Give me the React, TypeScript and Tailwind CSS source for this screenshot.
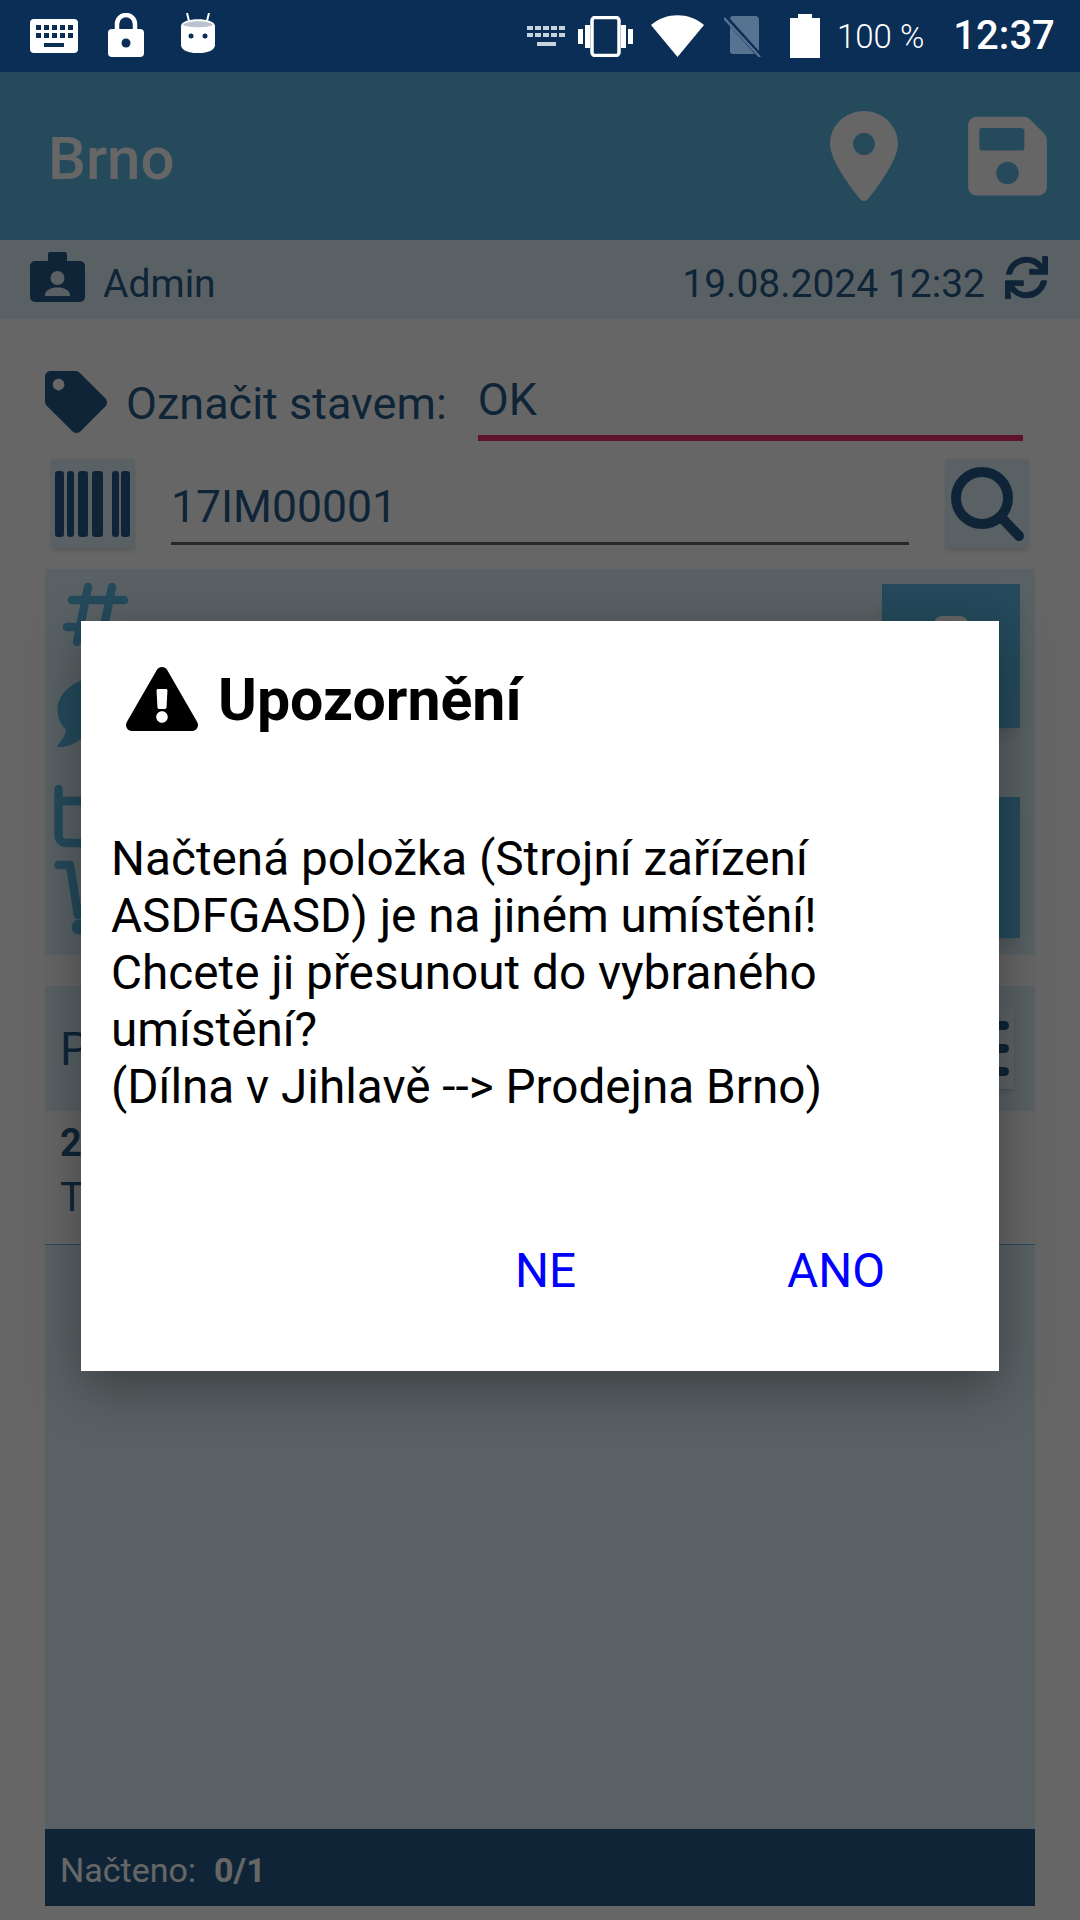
import React from 'react';
import { FaComment, FaExclamationTriangle, FaSave, FaSync, FaTag } from 'react-icons/fa';

const KeyboardIcon = () => (
  <svg width="48" height="34" viewBox="0 0 48 34">
    <rect width="48" height="34" rx="4" fill="#fff" />
    {[6, 14, 22, 30, 38].map(x => (
      <React.Fragment key={x}>
        <rect x={x} y="6" width="5" height="5" fill="#0a2e56" />
        <rect x={x} y="14" width="5" height="5" fill="#0a2e56" />
      </React.Fragment>
    ))}
    <rect x="14" y="24" width="20" height="4" fill="#0a2e56" />
  </svg>
);

const LockIcon = () => (
  <svg width="36" height="44" viewBox="0 0 36 44">
    <path d="M9 18V11a9 9 0 0 1 18 0v7" fill="none" stroke="#fff" strokeWidth="4.5" />
    <rect y="16" width="36" height="28" rx="4" fill="#fff" />
    <circle cx="18" cy="30" r="4.5" fill="#0a2e56" />
  </svg>
);

const RobotIcon = () => (
  <svg width="34" height="40" viewBox="0 0 34 40">
    <path d="M8 8 6 0M26 8l2-8" stroke="#fff" strokeWidth="2" />
    <path d="M0 13c0-9 34-9 34 0v19c0 11-34 11-34 0z" fill="#fff" />
    <path d="M2 12c4-5 26-5 30 0-6 3-24 3-30 0z" fill="#b9c3cf" />
    <circle cx="10" cy="23" r="2.5" fill="#0a2e56" />
    <circle cx="24" cy="23" r="2.5" fill="#0a2e56" />
  </svg>
);

const SmallKeyboardIcon = () => (
  <svg width="39" height="21" viewBox="0 0 39 21">
    {[0, 8, 16, 24, 32].map(x => (
      <React.Fragment key={x}>
        <rect x={x} y="0" width="6" height="4" fill="#c9d3de" />
        <rect x={x} y="7" width="6" height="4" fill="#c9d3de" />
      </React.Fragment>
    ))}
    <rect x="10" y="16" width="19" height="4" fill="#c9d3de" />
  </svg>
);

const VibrateIcon = () => (
  <svg width="55" height="41" viewBox="0 0 55 41">
    <rect x="14" y="1.5" width="27" height="38" rx="3" fill="none" stroke="#fff" strokeWidth="3.5" />
    <rect x="0" y="13" width="5" height="15" fill="#fff" />
    <rect x="7" y="9" width="5" height="23" fill="#fff" />
    <rect x="43" y="9" width="5" height="23" fill="#fff" />
    <rect x="50" y="13" width="5" height="15" fill="#fff" />
  </svg>
);

const WifiIcon = () => (
  <svg width="53" height="42" viewBox="0 0 53 42">
    <path d="M0 10C15-3 38-3 53 10L26.5 42z" fill="#fff" />
  </svg>
);

const NoSimIcon = () => (
  <svg width="38" height="42" viewBox="0 0 38 42">
    <path d="M6 4a3 3 0 0 1 3-3h22a4 4 0 0 1 4 4v31a3 3 0 0 1-3 3H9a3 3 0 0 1-3-3z" fill="#567391" />
    <path d="M1 2 36 41" stroke="#0a2e56" strokeWidth="5" />
    <path d="M0 3 36 42" stroke="#567391" strokeWidth="2.5" />
  </svg>
);

const BatteryIcon = () => (
  <svg width="30" height="44" viewBox="0 0 30 44">
    <path d="M8 0h14v4h8v40H0V4h8z" fill="#fff" />
  </svg>
);

const PinIcon = () => (
  <svg width="68" height="90" viewBox="0 0 68 90">
    <path
      fillRule="evenodd"
      d="M34 0C15 0 0 15 0 33c0 15 18 40 30 55a5 5 0 0 0 8 0c12-15 30-40 30-55C68 15 53 0 34 0zm0 22a11 11 0 1 1 0 22 11 11 0 0 1 0-22z"
      fill="currentColor"
    />
  </svg>
);

const BadgeIcon = () => (
  <svg width="55" height="50" viewBox="0 0 55 50">
    <path
      fillRule="evenodd"
      d="M20 0h15a2 2 0 0 1 2 2v7h13a5 5 0 0 1 5 5v31a5 5 0 0 1-5 5H5a5 5 0 0 1-5-5V14a5 5 0 0 1 5-5h13V2a2 2 0 0 1 2-2zM27.500 19a7 7 0 1 0 0 14 7 7 0 0 0 0-14zM15 43c0-10 25-10 25 0v1H15z"
      fill="currentColor"
    />
  </svg>
);

const BarcodeIcon = () => (
  <svg width="76" height="66" viewBox="0 0 76 66" fill="currentColor">
    <rect x="0" y="0" width="9" height="66" rx="3" />
    <rect x="12" y="0" width="7" height="66" rx="3" />
    <rect x="23" y="0" width="10" height="66" rx="3" />
    <rect x="37" y="0" width="11" height="66" rx="3" />
    <rect x="57" y="0" width="7" height="66" rx="3" />
    <rect x="66" y="0" width="9" height="66" rx="3" />
  </svg>
);

const SearchIcon = () => (
  <svg width="74" height="75" viewBox="0 0 74 75" fill="none" stroke="currentColor" strokeLinecap="round">
    <circle cx="32" cy="32" r="26" strokeWidth="10" />
    <path d="M51 51 69 70" strokeWidth="10" />
  </svg>
);

const HashIcon = () => (
  <svg width="66" height="66" viewBox="0 0 66 66" fill="none" stroke="currentColor" strokeWidth="8.500" strokeLinecap="round">
    <path d="M25 5 14 60M49 5 38 60M9 18h52M4 45h52" />
  </svg>
);

const BoxCartIcon = () => (
  <svg width="90" height="160" viewBox="0 0 90 160" className="text-[#5bbae6]">
    <g fill="none" stroke="currentColor" strokeWidth="8.500" strokeLinecap="round" strokeLinejoin="round">
      <path d="M4.500 9v46a8 8 0 0 0 8 8h72M4.500 21h80" />
      <path d="M4.500 85H16l8 50" />
      <path d="M26 133h60" />
    </g>
    <circle cx="25" cy="147" r="7.500" fill="currentColor" />
  </svg>
);

const App: React.FC = () => {
  return (
    <div className="relative w-[1080px] h-[1920px] overflow-hidden bg-white flex flex-col font-['Roboto',sans-serif] text-[#265d8a]">
      <div className="relative z-20 h-[72px] shrink-0 bg-[#0a2e56] flex items-center text-white">
        <div className="ml-[30px]"><KeyboardIcon /></div>
        <div className="ml-[30px] mb-[2px]"><LockIcon /></div>
        <div className="ml-[37px] mb-[6px]"><RobotIcon /></div>
        <div className="ml-[312px]"><SmallKeyboardIcon /></div>
        <div className="ml-[12px]"><VibrateIcon /></div>
        <div className="ml-[18px]"><WifiIcon /></div>
        <div className="ml-[20px]"><NoSimIcon /></div>
        <div className="ml-[28px]"><BatteryIcon /></div>
        <span className="ml-[17px] text-[33px] leading-none font-light">100 %</span>
        <span className="ml-[29px] text-[40px] leading-none font-medium">12:37</span>
      </div>

      <div className="h-[168px] shrink-0 bg-[#5bbae6] flex items-center justify-between pl-[48px] pr-[33px] text-white">
        <span className="mt-[5px] text-[60px] leading-none font-medium">Brno</span>
        <div className="flex items-center gap-[70px]">
          <PinIcon />
          <FaSave className="w-[79px] h-[90px]" />
        </div>
      </div>

      <div className="h-[79px] shrink-0 bg-[#dff3fa] flex items-center pl-[30px] pr-[30px]">
        <div className="mb-[6px]"><BadgeIcon /></div>
        <span className="ml-[18px] mt-[9px] text-[39px] leading-none">Admin</span>
        <span className="ml-auto mt-[9px] text-[39px] leading-none">19.08.2024 12:32</span>
        <FaSync className="ml-[18px] w-[47px] h-[43px] mb-[5px]" />
      </div>

      <main className="flex-1 flex flex-col px-[45px] pb-[14px]">
        <div className="mt-[52px] h-[70px] flex items-start">
          <FaTag className="w-[62px] h-[62px]" />
          <span className="ml-[19px] mt-[10px] text-[45px] leading-none">Označit stavem:</span>
          <div className="ml-[31px] flex-1 mr-[12px] h-[70px] border-b-[6px] border-[#ef2f6e]">
            <span className="block mt-[3px] text-[45px] leading-[52px]">OK</span>
          </div>
        </div>

        <div className="mt-[18px] h-[89px] flex items-start px-[6px]">
          <button className="w-[84px] h-[89px] bg-[#dff3fa] shadow-md flex items-center justify-center">
            <BarcodeIcon />
          </button>
          <div className="ml-[36px] w-[738px] h-[86px] border-b-[3px] border-[#666666] flex items-end pb-[13px]">
            <span className="text-[44.500px] leading-none">17IM00001</span>
          </div>
          <button className="ml-[36px] w-[84px] h-[89px] bg-[#dff3fa] shadow-md flex items-center justify-center">
            <SearchIcon />
          </button>
        </div>

        <section className="mt-[21px] h-[386px] bg-[#dff3fa] flex justify-between pl-[9px] pr-[15px] py-[15px]">
          <div className="text-[#5bbae6] flex flex-col">
            <div className="ml-[9px] -mt-[2px]"><HashIcon /></div>
            <FaComment className="w-[86px] h-[86px] mt-[25px]" />
            <div className="mt-[28px]"><BoxCartIcon /></div>
          </div>
          <div className="flex flex-col justify-between w-[138px]">
            <div className="h-[144px] bg-[#5bbae6] shadow-lg flex justify-center">
              <div className="w-[34px] h-[8px] mt-[32px] bg-white rounded-t-lg" />
            </div>
            <div className="h-[141px] bg-[#5bbae6] shadow-lg mb-[2px]" />
          </div>
        </section>

        <section className="mt-[31px] h-[125px] bg-[#dff3fa] flex items-center justify-between pl-[15px] pr-[21px]">
          <span className="text-[46px] leading-none">P</span>
          <button className="w-[60px] h-[80px] bg-[#eef8fc] shadow-md flex flex-col items-end justify-center gap-[14px] pr-[5px]">
            <span className="block w-[34px] h-[9px] rounded-full bg-[#265d8a]" />
            <span className="block w-[34px] h-[9px] rounded-full bg-[#265d8a]" />
            <span className="block w-[34px] h-[9px] rounded-full bg-[#265d8a]" />
          </button>
        </section>

        <div className="h-[134px] border-b border-[#5bbae6] pl-[15px] pt-[10px]">
          <div className="text-[38px] leading-[44px] font-bold">2</div>
          <div className="mt-[10px] text-[40px] leading-[46px]">T</div>
        </div>

        <div className="flex-1 bg-[#dff3fa]" />

        <div className="h-[77px] shrink-0 bg-[#265d8a] text-white flex items-center pl-[15px] pt-[6px] text-[34px]">
          <span>Načteno:</span>
          <span className="ml-[18px] font-bold">0/1</span>
        </div>
      </main>

      <div className="absolute inset-x-0 top-[72px] bottom-0 z-10 bg-black/60 flex items-center justify-center">
        <div className="w-[918px] h-[750px] bg-white text-black shadow-[0_16px_50px_rgba(0,0,0,0.35)] flex flex-col">
          <div className="mt-[43px] ml-[45px] flex items-center">
            <FaExclamationTriangle className="w-[72px] h-[64px] -mt-[3px]" />
            <span className="ml-[20px] text-[59px] leading-[72px] font-bold">Upozornění</span>
          </div>
          <p className="mt-[95px] mx-[30px] text-[47.700px] leading-[57px]">
            Načtená položka (Strojní zařízení
            <br />
            ASDFGASD) je na jiném umístění!
            <br />
            Chcete ji přesunout do vybraného
            <br />
            umístění?
            <br />
            (Dílna v Jihlavě --&gt; Prodejna Brno)
          </p>
          <div className="mt-auto mb-[75px] flex justify-end pr-[114px] gap-[211px] text-[47.700px] leading-none text-[#0000ff]">
            <span>NE</span>
            <span>ANO</span>
          </div>
        </div>
      </div>
    </div>
  );
};

export default App;
